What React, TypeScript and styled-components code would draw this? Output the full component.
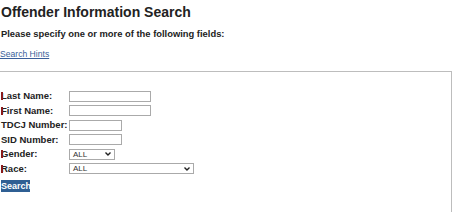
import React from "react";
import styled, { createGlobalStyle } from "styled-components";

const Global = createGlobalStyle`
  html, body { margin: 0; padding: 0; background: #fff; }
  body { font-family: "Liberation Sans", Arial, sans-serif; color: #222; overflow: hidden; }
`;

const Page = styled.div`
  width: 474px;
  height: 212px;
  box-sizing: border-box;
  padding-top: 4px;
  overflow: hidden;
`;

const Title = styled.h1`
  margin: 0 0 0 1px;
  font-size: 14px;
  line-height: 17px;
  font-weight: bold;
  color: #222;
`;

const Sub = styled.p`
  margin: 7px 0 0 1px;
  font-size: 9.4px;
  line-height: 12px;
  font-weight: bold;
  color: #222;
`;

const Hint = styled.a`
  display: block;
  margin: 9px 0 0 0;
  font-size: 8.6px;
  line-height: 11px;
  color: #3a5f9a;
  text-decoration: underline;
`;

const Box = styled.div`
  margin: 11px 0 0 -10px;
  width: 462px;
  height: 200px;
  box-sizing: border-box;
  border: 1px solid #bdbdbd;
  border-bottom: none;
  padding: 18px 0 0 10px;
`;

const Form = styled.div`
  display: grid;
  grid-template-columns: 68px auto;
  grid-auto-rows: 12px;
  row-gap: 2.5px;
  align-items: center;
  justify-items: start;
`;

const Label = styled.label<{ $req?: boolean }>`
  position: relative;
  font-size: 9.5px;
  line-height: 12px;
  font-weight: bold;
  color: #222;
  white-space: nowrap;
  &::before {
    content: "";
    display: ${(p) => (p.$req ? "block" : "none")};
    position: absolute;
    left: 0;
    top: 2px;
    width: 2px;
    height: 8px;
    background: #8b1a1a;
  }
`;

const Input = styled.input<{ $w: number }>`
  width: ${(p) => p.$w}px;
  height: 11px;
  box-sizing: border-box;
  border: 1px solid #aaa;
  padding: 0;
  margin: 0;
  background: #fff;
`;

const SelectBox = styled.div<{ $w: number }>`
  width: ${(p) => p.$w}px;
  height: 11px;
  box-sizing: border-box;
  border: 1px solid #aaa;
  display: flex;
  align-items: center;
  justify-content: space-between;
  padding: 0 3px 0 3px;
  font-size: 8px;
  color: #333;
`;

const Caret = styled.svg`
  width: 6px;
  height: 4px;
`;

const Button = styled.button`
  margin-top: 5px;
  height: 12px;
  width: 29px;
  padding: 0;
  border: none;
  background: #2f5f93;
  color: #fff;
  font-family: "Liberation Sans", Arial, sans-serif;
  font-size: 9px;
  font-weight: bold;
  line-height: 12px;
  text-align: center;
  display: block;
`;

const Select = ({ w }: { w: number }) => (
  <SelectBox $w={w}>
    <span>ALL</span>
    <Caret viewBox="0 0 6 4">
      <path d="M0.5 0.5 L3 3 L5.5 0.5" fill="none" stroke="#222" strokeWidth="1.4" />
    </Caret>
  </SelectBox>
);

export default function App() {
  return (
    <Page>
      <Global />
      <Title>Offender Information Search</Title>
      <Sub>Please specify one or more of the following fields:</Sub>
      <Hint href="#">Search Hints</Hint>
      <Box>
        <Form>
          <Label $req>Last Name:</Label>
          <Input $w={82} />
          <Label $req>First Name:</Label>
          <Input $w={82} />
          <Label>TDCJ Number:</Label>
          <Input $w={53} />
          <Label>SID Number:</Label>
          <Input $w={53} />
          <Label $req>Gender:</Label>
          <Select w={46} />
          <Label $req>Race:</Label>
          <Select w={125} />
        </Form>
        <Button>Search</Button>
      </Box>
    </Page>
  );
}
